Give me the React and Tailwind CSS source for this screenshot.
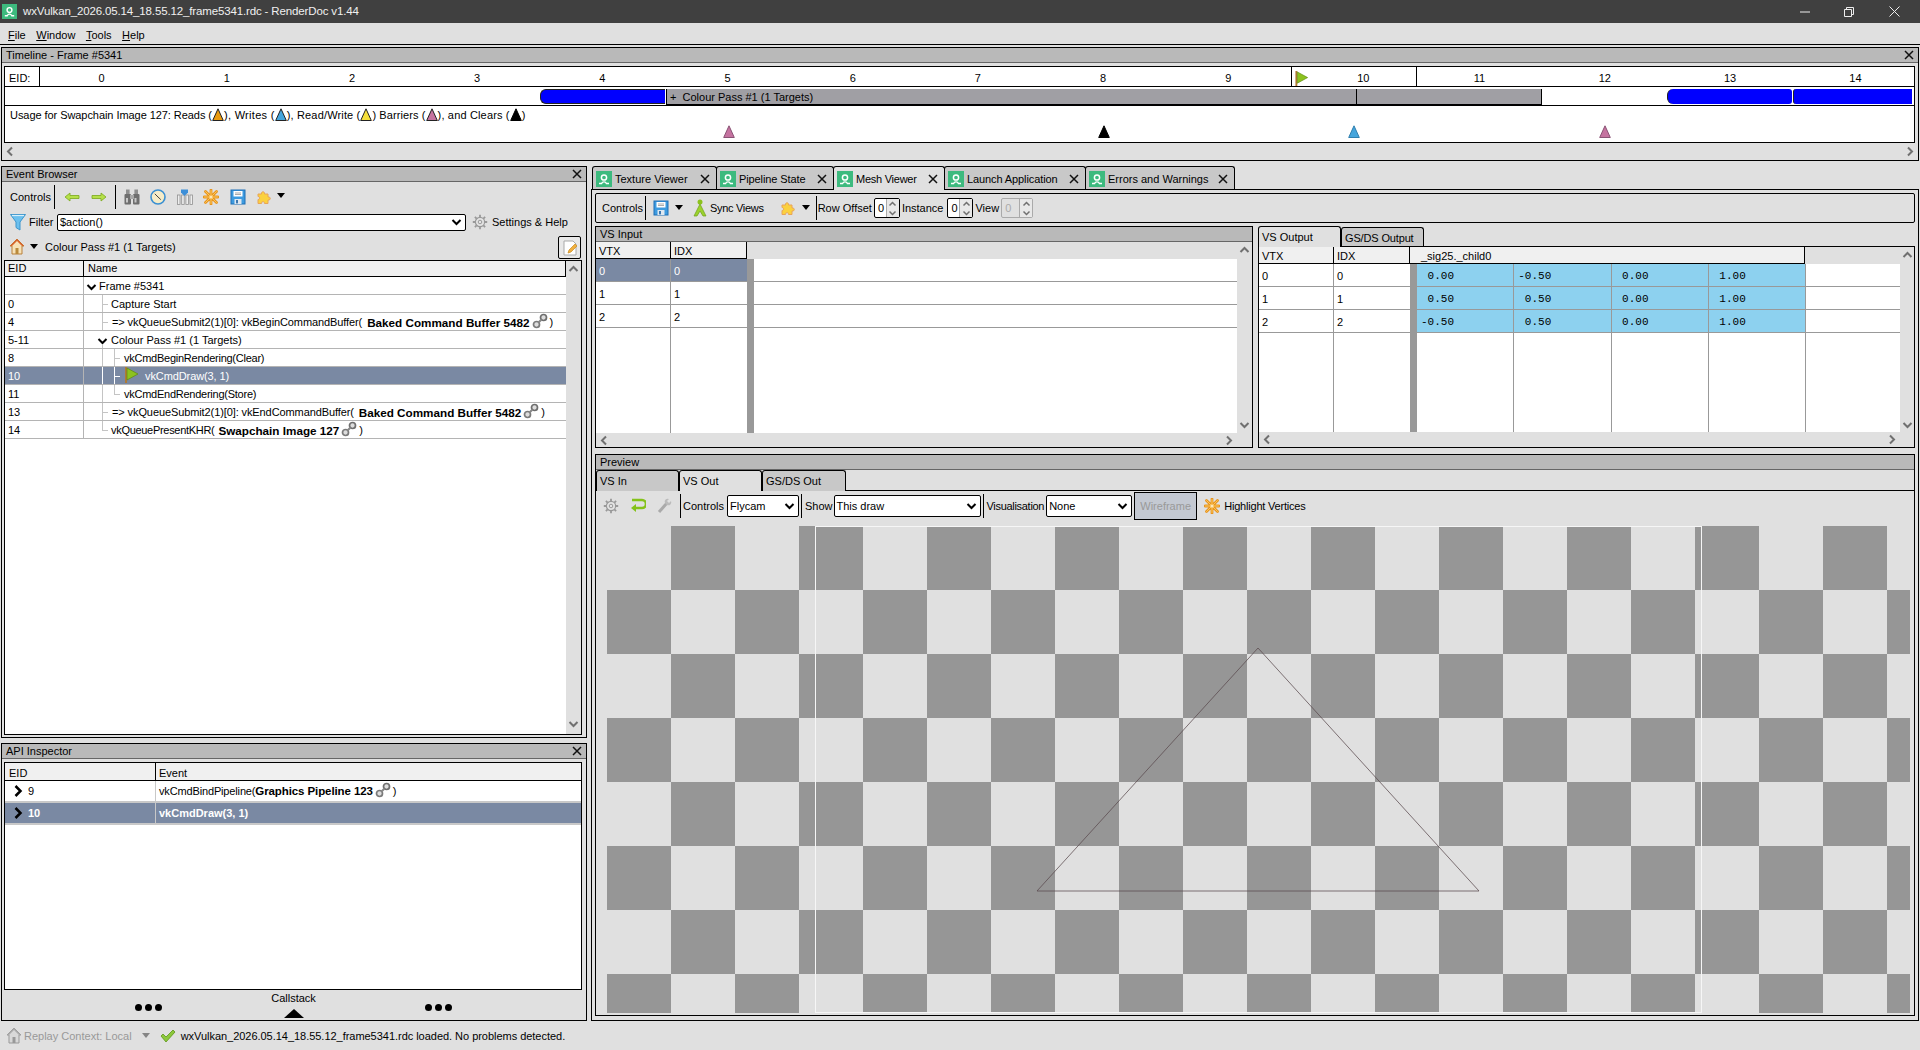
import React from 'react'

const rows = [
  { eid: '', x: 'pl-[15px]', text: 'Frame #5341', arrow: true },
  { eid: '0', x: 'pl-[27px]', text: 'Capture Start', guide: 'a' },
  { eid: '4', x: 'pl-[28px]', text: '=> vkQueueSubmit2(1)[0]: vkBeginCommandBuffer(', track: 'tracking-[-0.1px]', bold: 'Baked Command Buffer 5482', boldMl: 'ml-[5px]', guide: 'a' },
  { eid: '5-11', x: 'pl-[27px]', text: 'Colour Pass #1 (1 Targets)', arrow: 'b', guide: 'v' },
  { eid: '8', x: 'pl-[40px]', text: 'vkCmdBeginRendering(Clear)', track: 'tracking-[-0.25px]', guide: 'b' },
  { eid: '10', x: 'pl-[61px]', text: 'vkCmdDraw(3, 1)', track: 'tracking-[-0.1px]', guide: 'b', selected: true },
  { eid: '11', x: 'pl-[40px]', text: 'vkCmdEndRendering(Store)', track: 'tracking-[-0.25px]', guide: 'c' },
  { eid: '13', x: 'pl-[28px]', text: '=> vkQueueSubmit2(1)[0]: vkEndCommandBuffer(', track: 'tracking-[-0.1px]', bold: 'Baked Command Buffer 5482', boldMl: 'ml-[5px]', guide: 'a' },
  { eid: '14', x: 'pl-[27px]', text: 'vkQueuePresentKHR(', track: 'tracking-[-0.3px]', bold: 'Swapchain Image 127', boldMl: 'ml-[4px]', guide: 'z' },
]

const tabs = [
  { name: 'Texture Viewer', w: 'w-[125px]' },
  { name: 'Pipeline State', w: 'w-[118px]', track: 'tracking-[-0.1px]' },
  { name: 'Mesh Viewer', w: 'w-[112px]', track: 'tracking-[-0.25px]', active: true },
  { name: 'Launch Application', w: 'w-[142px]', track: 'tracking-[-0.1px]' },
  { name: 'Errors and Warnings', w: 'w-[150px]' },
]

const vsOut = [
  ['0', ['0.00', '-0.50', '0.00', '1.00']],
  ['1', ['0.50', '0.50', '0.00', '1.00']],
  ['2', ['-0.50', '0.50', '0.00', '1.00']],
]

const AppIcon = ({ className = 'w-4 h-4' }) => (
  <svg viewBox="0 0 16 16" className={`${className} shrink-0`}>
    <rect width="16" height="16" fill="#3dba7e" />
    <circle cx="8" cy="6.5" r="2.6" fill="none" stroke="#fff" strokeWidth="1.5" />
    <path d="M3 12.5h2.6c.4-1 1.2-1.6 2.4-1.6s2 .6 2.4 1.6H13" fill="none" stroke="#fff" strokeWidth="1.4" />
  </svg>
)

const Close = ({ className = '' }) => (
  <svg viewBox="0 0 10 10" className={`w-[10px] h-[10px] shrink-0 ${className}`}>
    <path d="M1 1l8 8M9 1l-8 8" stroke="#111" strokeWidth="1.5" />
  </svg>
)

const Caret = ({ className = '' }) => (
  <svg viewBox="0 0 8 5" className={`w-2 h-[5px] shrink-0 ${className}`}>
    <path d="M0 0h8L4 5z" fill="#000" />
  </svg>
)

const Chev = ({ dir = 'down', className = '' }) => {
  const d = { up: 'M1 6l4-4 4 4', down: 'M1 2l4 4 4-4', left: 'M6 1L2 5l4 4', right: 'M2 1l4 4-4 4' }[dir]
  const color = className.includes('dark') ? '#000' : '#707070'
  const side = dir === 'left' || dir === 'right'
  return (
    <svg viewBox={side ? '0 0 8 10' : '0 0 10 8'} className={`shrink-0 ${side ? 'w-2 h-[11px]' : 'w-[11px] h-2'} ${className}`}>
      <path d={d} fill="none" stroke={color} strokeWidth="2" />
    </svg>
  )
}

const Flag = ({ className = 'w-[14px] h-[15px]' }) => (
  <svg viewBox="0 0 14 16" className={`shrink-0 ${className}`}>
    <rect x="0" y="0" width="2" height="16" fill="#b07a35" />
    <path d="M2 1l11 6-11 6z" fill="#8cc21e" stroke="#5d8a10" strokeWidth=".7" />
  </svg>
)

const Link = () => (
  <svg viewBox="0 0 16 16" className="w-4 h-4 shrink-0 -mt-[3px]">
    <circle cx="4.5" cy="11.5" r="3" fill="#ddd" stroke="#7a7a7a" strokeWidth="1.7" />
    <circle cx="11.5" cy="4.5" r="3" fill="#ddd" stroke="#6e6e6e" strokeWidth="1.7" />
    <path d="M6.5 9.5l3-3" stroke="#888" strokeWidth="2.2" />
  </svg>
)

const Gear = ({ color = '#999' }) => (
  <svg viewBox="0 0 16 16" className="w-4 h-4 shrink-0">
    <circle cx="8" cy="8" r="4.6" fill="#e4e4e4" stroke={color} strokeWidth="1.2" />
    <circle cx="8" cy="8" r="1.8" fill="none" stroke={color} />
    <path d="M8 .8v2.4M8 12.8v2.4M.8 8h2.4M12.8 8h2.4M2.9 2.9l1.7 1.7M11.4 11.4l1.7 1.7M13.1 2.9l-1.7 1.7M4.6 11.4l-1.7 1.7" stroke={color} strokeWidth="1.8" />
  </svg>
)

const Puzzle = () => (
  <svg viewBox="0 0 16 16" className="w-4 h-4 shrink-0">
    <path d="M2 5h3.5c-.6-3 3.6-3 3 0H12v3c3-.6 3 3.6 0 3v3.5H8.5c.6-2.4-3.4-2.4-3 0H2v-4c2 .5 2-3.5 0-3z" fill="#fbd13e" stroke="#e8a45a" />
  </svg>
)

const Star = ({ className = 'w-4 h-4' }) => (
  <svg viewBox="0 0 16 16" className={`shrink-0 ${className}`}>
    <path d="M2.5 2.5l11 11M13.5 2.5l-11 11M8 1v14M1 8h14" stroke="#e8951e" strokeWidth="2.8" strokeLinecap="round" />
    <path d="M2.5 2.5l11 11M13.5 2.5l-11 11M8 1.5v13M1.5 8h13" stroke="#fbc65a" strokeWidth="1" strokeLinecap="round" />
    <circle cx="8" cy="8" r="1.6" fill="#fde7b8" />
  </svg>
)

const Save = () => (
  <svg viewBox="0 0 16 16" className="w-4 h-4 shrink-0">
    <rect x="1" y="1" width="14" height="14" fill="#3d9be0" stroke="#1f6fb5" />
    <rect x="3.5" y="2" width="9" height="5.5" fill="#fff" />
    <path d="M5 4h6M5 5.5h6" stroke="#888" strokeWidth=".7" />
    <rect x="4.5" y="10" width="7" height="5" fill="#dfe8f0" />
    <rect x="6" y="11" width="2" height="3.4" fill="#3d78b0" />
  </svg>
)

const Arrow = ({ left }) => (
  <svg viewBox="0 0 16 10" className="w-4 h-[10px] shrink-0">
    <path d={left ? 'M1 5l5-4v2.5h9v3H6V9z' : 'M15 5l-5-4v2.5H1v3h9V9z'} fill="#b6e04a" stroke="#7aa81c" strokeWidth=".8" />
  </svg>
)

const Binoculars = () => (
  <svg viewBox="0 0 16 16" className="w-4 h-4 shrink-0">
    <rect x=".5" y="5" width="6.5" height="10.5" rx="1" fill="#6f6f6f" />
    <rect x="9" y="5" width="6.5" height="10.5" rx="1" fill="#6f6f6f" />
    <rect x="2" y=".5" width="3.6" height="4.5" fill="#8f8f8f" />
    <rect x="10.4" y=".5" width="3.6" height="4.5" fill="#8f8f8f" />
    <rect x="6" y="6" width="4" height="4" fill="#a8a8a8" />
    <rect x="2" y="9" width="2" height="4.5" fill="#c8c8c8" />
    <rect x="10.5" y="9" width="2" height="4.5" fill="#c8c8c8" />
  </svg>
)

const Clock = () => (
  <svg viewBox="0 0 16 16" className="w-4 h-4 shrink-0">
    <circle cx="8" cy="8" r="7" fill="#f6ecc8" stroke="#3b90d2" strokeWidth="1.6" />
    <path d="M4.8 4.8L8 8l2.8 2.6" fill="none" stroke="#444" strokeWidth="1" />
  </svg>
)

const Bars = () => (
  <svg viewBox="0 0 16 16" className="w-4 h-4 shrink-0">
    <rect x="0.5" y="6" width="2.5" height="9.5" fill="#eee" stroke="#909090" strokeWidth=".8" />
    <rect x="4.7" y="6" width="2.5" height="9.5" fill="#eee" stroke="#909090" strokeWidth=".8" />
    <rect x="8.9" y="6" width="2.5" height="9.5" fill="#eee" stroke="#909090" strokeWidth=".8" />
    <rect x="13" y="6" width="2.5" height="9.5" fill="#eee" stroke="#909090" strokeWidth=".8" />
    <path d="M4 .5h7v3L7.5 7 4 3.5z" fill="#3d8fd8" />
  </svg>
)

const Funnel = () => (
  <svg viewBox="0 0 16 18" className="w-4 h-[18px] shrink-0">
    <path d="M.5 1.5h15L10 9v8l-4-2.5V9z" fill="#6cc0ee" stroke="#3d95cc" />
    <path d="M2 2.5h12" stroke="#d8f0fb" strokeWidth="1.2" />
  </svg>
)

const House = ({ gray }) => (
  <svg viewBox="0 0 16 17" className="w-4 h-[17px] shrink-0">
    <path d="M8 1L1 8h2v8h10V8h2z" fill={gray ? '#d8d8d8' : '#f6e2b8'} stroke={gray ? '#999' : '#b9803a'} />
    <path d="M8 1L1 8h2l5-5 5 5h2z" fill={gray ? '#aaa' : '#d9622b'} />
    <rect x="6.5" y="10" width="3" height="6" fill={gray ? '#999' : '#b98a3c'} />
  </svg>
)

const Tri = ({ color, border }) => (
  <svg viewBox="0 0 12 13" className="w-3 h-[13px] inline-block align-[-2px]">
    <path d="M6 .8l5.3 11.7H.7z" fill={color} stroke={border} />
  </svg>
)

const Panel = ({ title, close, className = '', children }) => (
  <div className={`flex flex-col border border-black ${className}`}>
    <div className="h-[15px] shrink-0 flex items-center justify-between bg-[#b9b9b9] border-b border-[#666] pl-[4px] pr-[4px] leading-[14px]">
      <span>{title}</span>
      {close && <Close />}
    </div>
    {children}
  </div>
)

const Sep = ({ className = '' }) => <div className={`w-px h-6 bg-black shrink-0 ${className}`} />

const Combo = ({ value, className = '' }) => (
  <div className={`flex items-center justify-between bg-white border border-black rounded-[2px] pl-[2px] pr-[3px] shrink-0 ${className}`}>
    <span>{value}</span>
    <Chev dir="down" className="dark" />
  </div>
)

const Spin = ({ disabled, w = 'w-[26px]' }) => (
  <div className={`flex h-[20px] shrink-0 ${w} border rounded-[2px] ${disabled ? 'border-[#aaa] bg-[#e0e0e0] text-[#aaa]' : 'border-black bg-white'}`}>
    <span className="flex-1 pl-[3px] leading-[18px]">0</span>
    <div className="w-[13px] flex flex-col items-center justify-around border-l border-[#aaa] bg-[#e8e8e8]">
      <Chev dir="up" className="w-[9px] h-[6px]" />
      <Chev dir="down" className="w-[9px] h-[6px]" />
    </div>
  </div>
)

const SmallTab = ({ label, active, className = '' }) => (
  <div className={`border border-b-0 border-black rounded-t-[3px] pl-[3px] leading-[21px] shrink-0 ${active ? 'bg-[#e0e0e0]' : 'bg-[#c8c8c8]'} ${className}`}>
    {label}
  </div>
)

const TreeGuides = ({ kind, selected }) => {
  const c = selected ? 'bg-white' : 'bg-[#c4c4c4]'
  return (
    <>
      {kind !== 'v' && kind !== undefined && kind !== 'z' && <span className={`absolute left-[18px] top-0 bottom-0 w-px ${c}`} />}
      {kind === 'z' && <span className={`absolute left-[18px] top-0 h-[9px] w-px ${c}`} />}
      {kind === 'v' && <span className="absolute left-[18px] top-[14px] bottom-0 w-px bg-[#c4c4c4]" />}
      {(kind === 'a' || kind === 'z') && <span className={`absolute left-[18px] top-[9px] h-px w-[6px] ${c}`} />}
      {kind === 'b' && <span className={`absolute left-[30px] top-0 bottom-0 w-px ${c}`} />}
      {kind === 'b' && <span className={`absolute left-[30px] top-[9px] h-px w-[6px] ${c}`} />}
      {kind === 'c' && <span className="absolute left-[30px] top-0 h-[9px] w-px bg-[#c4c4c4]" />}
      {kind === 'c' && <span className="absolute left-[30px] top-[9px] h-px w-[6px] bg-[#c4c4c4]" />}
    </>
  )
}

const Timeline = () => (
  <Panel title="Timeline - Frame #5341" close className="h-[114px] ml-[1px] w-[1918px] mt-[2px] shrink-0">
    <div className="mx-[2px] mt-[3px] h-[77px] border border-black bg-white shrink-0 w-[1911px] flex flex-col">
      <div className="h-[20px] flex border-b border-black shrink-0 leading-[22px] overflow-hidden">
        <div className="w-[35px] shrink-0 pl-[4px] border-r border-black">EID:</div>
        <div className="-ml-[1px]" />
        {['0', '1', '2', '3', '4', '5', '6', '7', '8', '9'].map((n) => (
          <div key={n} className="w-[125.2px] shrink-0 text-center">{n}</div>
        ))}
        <div className="w-[126px] shrink-0 relative text-center pl-[19px] border-x border-black">
          <Flag className="absolute left-[3px] top-[4px] w-[14px] h-[15px]" />
          10
        </div>
        {['11', '12', '13', '14'].map((n) => (
          <div key={n} className="w-[125.3px] shrink-0 text-center">{n}</div>
        ))}
      </div>
      <div className="h-[19px] flex pt-[2px] border-b border-black shrink-0 pl-[535px]">
        <div className="w-[125px] h-[15px] bg-[#0000ff] rounded-l-[6px] border border-[#222] border-r-0" />
        <div className="w-[876px] ml-px h-[17px] bg-[#a09fa4] border-b-2 border-black flex items-center relative leading-[15px] border-r border-l border-l-black">
          <span className="pl-[3px] pt-[2px]">+&nbsp;&nbsp;Colour Pass #1 (1 Targets)</span>
          <span className="absolute left-[689px] top-0 bottom-0 w-px bg-black" />
        </div>
        <div className="w-[125px] h-[15px] ml-[125px] bg-[#0000ff] rounded-l-[6px] rounded-r-[3px] border-l border-[#222]" />
        <div className="w-[119px] h-[15px] ml-px bg-[#0000ff] rounded-l-[3px] border-l border-[#222]" />
      </div>
      <div className="relative flex-1 pl-[5px] pt-[1px] leading-[16px] whitespace-nowrap">
        <span className="tracking-[-0.06px]">Usage for Swapchain Image 127: Reads (</span><Tri color="#e89b12" border="#222" />
        <span className="tracking-[0.3px]">), Writes (</span><Tri color="#45a5dc" border="#222" />
        <span className="tracking-[0.16px]">), Read/Write (</span><Tri color="#f5df3a" border="#222" />
        <span className="tracking-[0.1px]">) Barriers (</span><Tri color="#c573a0" border="#222" />
        <span className="tracking-[0.16px]">), and Clears (</span><Tri color="#000" border="#000" />)
        <span className="absolute left-[718px] top-[19px] flex"><Tri color="#c573a0" border="#8a5274" /></span>
        <span className="absolute left-[1093px] top-[19px] flex"><Tri color="#000" border="#000" /></span>
        <span className="absolute left-[1343px] top-[19px] flex"><Tri color="#45a5dc" border="#2f7fae" /></span>
        <span className="absolute left-[1594px] top-[19px] flex"><Tri color="#c573a0" border="#8a5274" /></span>
      </div>
    </div>
    <div className="flex-1 flex items-center justify-between px-[4px]">
      <Chev dir="left" />
      <Chev dir="right" />
    </div>
  </Panel>
)

const EventBrowser = () => (
  <Panel title="Event Browser" close className="h-[572px] shrink-0">
    <div className="h-[30px] flex items-center shrink-0">
      <span className="ml-[8px] w-[44px]">Controls</span>
      <Sep />
      <div className="ml-[9px] flex items-center gap-[10.5px]"><Arrow left /><Arrow /></div>
      <Sep className="ml-[8px]" />
      <div className="ml-[8px] flex items-center gap-[10.6px]">
        <Binoculars /><Clock /><Bars /><Star /><Save /><Puzzle />
      </div>
      <Caret className="ml-[5px] -mt-[4px]" />
    </div>
    <div className="h-[20px] flex items-center shrink-0">
      <span className="ml-[8px]"><Funnel /></span>
      <span className="ml-[3px] w-[28px]">Filter</span>
      <Combo value="$action()" className="w-[409px] h-[17px] leading-[15px]" />
      <span className="ml-[6px]"><Gear /></span>
      <span className="ml-[4px]">Settings &amp; Help</span>
    </div>
    <div className="h-[28px] flex items-center shrink-0 relative">
      <span className="ml-[7px]"><House /></span>
      <Caret className="ml-[5px]" />
      <span className="ml-[7px] pt-[2px]">Colour Pass #1 (1 Targets)</span>
      <div className="absolute left-[556px] top-[4px] w-[23px] h-[23px] border border-black rounded-[2px] flex items-center justify-center bg-[#e8e8e8]">
        <svg viewBox="0 0 16 16" className="w-4 h-4">
          <path d="M2 1h9l3 3v11H2z" fill="#fff" stroke="#aaa" />
          <path d="M6 13l1-3 6-6 2 2-6 6z" fill="#f0b040" stroke="#c98a1e" strokeWidth=".7" />
        </svg>
      </div>
    </div>
    <div className="mx-[2px] h-[475px] w-[578px] shrink-0 border border-black bg-white flex overflow-hidden">
      <div className="flex-1 flex flex-col">
        <div className="h-[16px] flex bg-[#f0f0f0] border-b border-black leading-[15px] border-r shrink-0">
          <div className="w-[79px] pl-[3px] border-r border-black">EID</div>
          <div className="pl-[4px]">Name</div>
        </div>
        {rows.map((r) => (
          <div key={r.eid + r.text} className={`h-[18px] flex shrink-0 border-b border-[#b4b4b4] leading-[19px] ${r.selected ? 'bg-[#7a89a3] text-white' : ''}`}>
            <div className="w-[79px] pl-[3px] border-r border-[#b4b4b4] shrink-0">{r.eid}</div>
            <div className={`relative flex-1 flex items-center whitespace-nowrap pt-[1px] ${r.x}`}>
              <TreeGuides kind={r.guide} selected={r.selected} />
              {r.arrow === true && <Chev dir="down" className="dark absolute left-[2px] top-[6px]" />}
              {r.arrow === 'b' && <Chev dir="down" className="dark absolute left-[13px] top-[6px]" />}
              {r.selected && <Flag className="absolute left-[41px] top-0 w-[14px] h-[16px]" />}
              <span className={r.track}>{r.text}</span>
              {r.bold && (
                <>
                  <b className={`font-bold text-[11.7px] ${r.boldMl}`}>{r.bold}</b>
                  <span className="ml-[2px]"><Link /></span>
                  <span className="ml-[2px]">)</span>
                </>
              )}
            </div>
          </div>
        ))}
      </div>
      <div className="w-[15px] shrink-0 bg-[#e0e0e0] flex flex-col items-center justify-between pt-[4px] pb-[6px]">
        <Chev dir="up" />
        <Chev dir="down" />
      </div>
    </div>
  </Panel>
)

const ApiInspector = () => (
  <Panel title="API Inspector" close className="h-[278px] mt-[5px] shrink-0">
    <div className="mx-[2px] mt-[3px] h-[228px] w-[578px] shrink-0 border border-black bg-white flex flex-col">
      <div className="h-[18px] flex bg-[#f0f0f0] border-b border-black leading-[20px] shrink-0">
        <div className="w-[151px] pl-[4px] border-r border-black">EID</div>
        <div className="pl-[3px]">Event</div>
      </div>
      <div className="h-[22px] flex border-b-2 border-[#c8c8c8] items-center shrink-0 leading-[23px]">
        <div className="w-[151px] h-full flex items-center border-r border-[#c8c8c8] pl-[8px] gap-[5px]">
          <Chev dir="right" className="dark w-[10px] h-[14px]" /><span>9</span>
        </div>
        <div className="flex items-center pl-[3px] whitespace-nowrap">
          <span className="tracking-[-0.15px]">vkCmdBindPipeline(</span><b className="text-[11.5px] tracking-[-0.1px]">Graphics Pipeline 123</b>
          <span className="ml-[2px]"><Link /></span><span className="ml-[2px]">)</span>
        </div>
      </div>
      <div className="h-[22px] flex border-b-2 border-[#c8c8c8] items-center bg-[#7a89a3] text-white font-bold shrink-0 leading-[23px]">
        <div className="w-[151px] h-full flex items-center border-r border-[#c8c8c8] pl-[8px] gap-[5px]">
          <Chev dir="right" className="dark w-[10px] h-[14px]" /><span>10</span>
        </div>
        <div className="pl-[3px]">vkCmdDraw(3, 1)</div>
      </div>
    </div>
    <div className="flex-1 flex ml-[74px]">
      <div className="w-[145px] flex justify-center items-end pb-[9px]">
        <Dots />
      </div>
      <div className="w-[145px] flex flex-col items-center pt-[1px] leading-[14px]">
        <span>Callstack</span>
        <svg viewBox="0 0 20 9" className="w-5 h-[9px] mt-[4px]"><path d="M0 9L10 0l10 9z" fill="#000" /></svg>
      </div>
      <div className="w-[145px] flex justify-center items-end pb-[9px]">
        <Dots />
      </div>
    </div>
  </Panel>
)

const Dots = () => (
  <div className="flex gap-[3px]">
    <span className="w-[7px] h-[7px] rounded-full bg-black" />
    <span className="w-[7px] h-[7px] rounded-full bg-black" />
    <span className="w-[7px] h-[7px] rounded-full bg-black" />
  </div>
)

const MeshToolbar = () => (
  <div className="h-[30px] mx-[3px] mt-[3px] border border-black rounded-[2px] flex items-center shrink-0">
    <span className="ml-[6px] w-[43px] pt-[1px]">Controls</span>
    <Sep />
    <span className="ml-[7px]"><Save /></span>
    <Caret className="ml-[6px] -mt-[2px]" />
    <svg viewBox="0 0 16 18" className="w-4 h-[18px] ml-[9px] shrink-0">
      <circle cx="8" cy="3" r="2.5" fill="#8cc21e" />
      <path d="M8 5L2 17h3l3-5 3 5h3z" fill="#9bd22c" stroke="#6f9e18" strokeWidth=".7" />
    </svg>
    <span className="ml-[2px] tracking-[-0.3px] pt-[1px]">Sync Views</span>
    <span className="ml-[16px]"><Puzzle /></span>
    <Caret className="ml-[6px] -mt-[2px]" />
    <Sep className="ml-[6px]" />
    <span className="ml-[1px] pt-[1px]">Row Offset</span>
    <span className="ml-[2px]"><Spin /></span>
    <span className="ml-[2px] pt-[1px]">Instance</span>
    <span className="ml-[4px]"><Spin /></span>
    <span className="ml-[2px] pt-[1px]">View</span>
    <span className="ml-[2px]"><Spin disabled w="w-[32px]" /></span>
  </div>
)

const VsInput = () => (
  <Panel title="VS Input" className="w-[658px] h-[222px] shrink-0">
    <div className="flex-1 flex min-h-0">
      <div className="flex-1 flex flex-col">
        <div className="h-[17px] flex shrink-0">
          <div className="w-[75px] pl-[3px] bg-[#f0f0f0] border-r border-b border-black leading-[18px]">VTX</div>
          <div className="w-[76px] pl-[3px] bg-[#f0f0f0] border-r border-b border-black leading-[18px]">IDX</div>
        </div>
        <div className="flex-1 flex bg-white min-h-0">
          <div className="w-[75px] border-r border-[#999] shrink-0">
            {['0', '1', '2'].map((n, i) => (
              <div key={n} className={`h-[23px] pl-[3px] border-b border-[#999] leading-[24px] ${i === 0 ? 'bg-[#7a89a3] text-white' : ''}`}>{n}</div>
            ))}
          </div>
          <div className="w-[76px] shrink-0">
            {['0', '1', '2'].map((n, i) => (
              <div key={n} className={`h-[23px] pl-[3px] border-b border-[#999] leading-[24px] ${i === 0 ? 'bg-[#7a89a3] text-white' : ''}`}>{n}</div>
            ))}
          </div>
          <div className="w-[7px] bg-[#999] shrink-0" />
          <div className="flex-1">
            <div className="h-[23px] border-b border-[#999]" />
            <div className="h-[23px] border-b border-[#999]" />
            <div className="h-[23px] border-b border-[#999]" />
          </div>
        </div>
        <div className="h-[14px] flex items-center justify-between px-[4px] shrink-0">
          <Chev dir="left" /><Chev dir="right" />
        </div>
      </div>
      <div className="w-[15px] flex flex-col items-center justify-between pt-[4px] pb-[18px] shrink-0">
        <Chev dir="up" /><Chev dir="down" />
      </div>
    </div>
  </Panel>
)

const VsOutput = () => (
  <div className="w-[657px] ml-[5px] h-[222px] flex flex-col shrink-0">
    <div className="flex h-[21px] shrink-0">
      <SmallTab label="VS Output" active className="w-[83px] h-[21px] z-10 -mb-px" />
      <SmallTab label="GS/DS Output" className="w-[83px] h-[20px] leading-[19px] mt-px tracking-[-0.15px]" />
    </div>
    <div className="flex-1 border border-black flex min-h-0 -mt-px">
      <div className="flex-1 flex flex-col min-w-0">
        <div className="h-[17px] flex shrink-0 leading-[18px]">
          <div className="w-[75px] pl-[3px] bg-[#f0f0f0] border-b border-r border-black">VTX</div>
          <div className="w-[76px] pl-[3px] bg-[#f0f0f0] border-b border-r border-black">IDX</div>
          <div className="w-[395px] pl-[11px] bg-[#f0f0f0] border-b border-r border-black">_sig25._child0</div>
        </div>
        <div className="flex-1 flex bg-white min-h-0">
          <div className="w-[75px] border-r border-[#999] shrink-0">
            {vsOut.map(([n]) => <div key={n} className="h-[23px] pl-[3px] border-b border-[#999] leading-[24px]">{n}</div>)}
          </div>
          <div className="w-[76px] shrink-0">
            {vsOut.map(([n]) => <div key={n} className="h-[23px] pl-[3px] border-b border-[#999] leading-[24px]">{n}</div>)}
          </div>
          <div className="w-[7px] bg-[#999] shrink-0" />
          {[0, 1, 2, 3].map((c) => (
            <div key={c} className="w-[97.25px] border-r border-[#999] shrink-0">
              {vsOut.map(([n, vals]) => (
                <div key={n} className="h-[23px] bg-[#8dd1ef] border-b border-[#999] font-['Liberation_Mono',monospace] text-[11px] leading-[24px] pl-[4px] whitespace-pre">
                  {vals[c].padStart(5, ' ')}
                </div>
              ))}
            </div>
          ))}
          <div className="flex-1">
            <div className="h-[23px] border-b border-[#999]" />
            <div className="h-[23px] border-b border-[#999]" />
            <div className="h-[23px] border-b border-[#999]" />
          </div>
        </div>
        <div className="h-[15px] flex items-center justify-between px-[4px] shrink-0">
          <Chev dir="left" /><Chev dir="right" />
        </div>
      </div>
      <div className="w-[14px] flex flex-col items-center justify-between pt-[4px] pb-[18px] shrink-0">
        <Chev dir="up" /><Chev dir="down" />
      </div>
    </div>
  </div>
)

const Preview = () => (
  <Panel title="Preview" className="mx-[3px] mt-[6px] h-[562px] shrink-0">
    <div className="flex h-[21px] shrink-0 border-b border-black -mb-px">
      <SmallTab label="VS In" className="w-[83px] h-[21px] leading-[20px]" />
      <SmallTab label="VS Out" active className="w-[83px] h-[21px] z-10 leading-[20px]" />
      <SmallTab label="GS/DS Out" className="w-[84px] h-[21px] leading-[20px]" />
    </div>
    <div className="h-[32px] flex items-center shrink-0">
      <span className="ml-[7px]"><Gear /></span>
      <svg viewBox="0 0 16 16" className="w-4 h-4 ml-[11px] shrink-0">
        <path d="M2 2h10a2.5 2.5 0 0 1 0 8H5" fill="none" stroke="#84c21a" strokeWidth="2.6" />
        <path d="M6 6l-5 4 5 4z" fill="#84c21a" />
      </svg>
      <svg viewBox="0 0 16 16" className="w-4 h-4 ml-[10px] shrink-0">
        <path d="M3 14L11 5" stroke="#aaa" strokeWidth="3" />
        <path d="M9 5a3 3 0 0 1 4-4l-2 2 2 2 2-2a3 3 0 0 1-4 4z" fill="#bbb" />
      </svg>
      <Sep className="ml-[8px]" />
      <span className="ml-[2px] pt-[1px]">Controls</span>
      <Combo value="Flycam" className="w-[72px] h-[22px] leading-[20px] ml-[3px]" />
      <Sep className="ml-[2px]" />
      <span className="ml-[3px] pt-[1px]">Show</span>
      <Combo value="This draw" className="w-[147px] h-[22px] leading-[20px] ml-[1px]" />
      <Sep className="ml-[2px]" />
      <span className="ml-[3px] pt-[1px] tracking-[-0.3px]">Visualisation</span>
      <Combo value="None" className="w-[86px] h-[22px] leading-[20px] ml-[2px]" />
      <div className="ml-[2px] w-[63px] h-[28px] border border-black bg-[#c4c9d2] text-[#999] flex items-center justify-center shrink-0">Wireframe</div>
      <span className="ml-[7px]"><Star /></span>
      <span className="ml-[4px] pt-[1px] tracking-[-0.2px]">Highlight Vertices</span>
    </div>
    <div className="relative ml-[11px] w-[1303px] h-[487px] bg-[conic-gradient(#969696_25%,#e0e0e0_0_50%,#969696_0_75%,#e0e0e0_0)] bg-[length:128px_128px] mt-[4px] shrink-0">
      <div className="absolute left-[208px] top-0 w-[887px] h-[487px] border border-[#f6f6f6]" />
      <svg viewBox="0 0 1303 487" className="absolute inset-0 w-full h-full">
        <path d="M651 122L430 365h442z" fill="none" stroke="#5a4a4e" strokeOpacity=".75" strokeWidth="1" />
      </svg>
    </div>
  </Panel>
)

export default function App() {
  return (
    <div className="w-[1920px] h-[1050px] bg-[#e0e0e0] text-black text-[11px] font-['Liberation_Sans',sans-serif] flex flex-col overflow-hidden">
      <div className="h-[23px] bg-[#404040] flex items-center shrink-0 text-[#f0f0f0] text-[11.5px]">
        <span className="ml-[2px]"><AppIcon className="w-[15px] h-[15px]" /></span>
        <span className="ml-[6px] tracking-[-0.14px]">wxVulkan_2026.05.14_18.55.12_frame5341.rdc - RenderDoc v1.44</span>
        <div className="ml-auto flex items-center">
          <svg viewBox="0 0 10 10" className="w-[10px] h-[10px] mr-[34px]"><path d="M0 5h10" stroke="#eee" /></svg>
          <svg viewBox="0 0 10 10" className="w-[10px] h-[10px] mr-[35px]"><path d="M.5 2.5h7v7h-7zM2.5 2.5v-2h7v7h-2" fill="none" stroke="#eee" /></svg>
          <svg viewBox="0 0 11 11" className="w-[11px] h-[11px] mr-[20px]"><path d="M.5.5l10 10M10.5.5l-10 10" stroke="#eee" /></svg>
        </div>
      </div>
      <div className="h-[22px] flex items-center border-b border-black shrink-0 pl-[8px] pt-[3px] gap-[10.5px]">
        <span><u>F</u>ile</span>
        <span><u>W</u>indow</span>
        <span><u>T</u>ools</span>
        <span><u>H</u>elp</span>
      </div>
      <Timeline />
      <div className="flex mt-[5px] h-[855px] shrink-0">
        <div className="w-[586px] ml-[1px] flex flex-col shrink-0">
          <EventBrowser />
          <ApiInspector />
        </div>
        <div className="w-[1328px] ml-[4px] flex flex-col shrink-0">
          <div className="flex h-[24px] shrink-0 pl-[1px]">
            {tabs.map((t) => (
              <div key={t.name} className={`${t.w} h-[24px] -mr-px flex items-center border border-b-0 border-black rounded-t-[3px] pl-[3px] pr-[6px] shrink-0 ${t.active ? 'bg-[#e0e0e0] z-10' : 'bg-[#c8c8c8]'}`}>
                <AppIcon />
                <span className={`ml-[3px] flex-1 pt-[1px] ${t.track || ''}`}>{t.name}</span>
                <Close />
              </div>
            ))}
          </div>
          <div className="h-[832px] border border-black -mt-px flex flex-col shrink-0">
            <MeshToolbar />
            <div className="flex mx-[3px] mt-[3px] shrink-0">
              <VsInput />
              <VsOutput />
            </div>
            <Preview />
          </div>
        </div>
      </div>
      <div className="flex-1 flex items-center">
        <span className="ml-[6px]"><House gray /></span>
        <span className="ml-[2px] text-[#999] pt-[1px]">Replay Context: Local</span>
        <Caret className="ml-[10px] opacity-40" />
        <svg viewBox="0 0 16 14" className="w-4 h-[14px] ml-[10px] shrink-0">
          <path d="M1 7l2-2 3 3 7-7 2 2-9 10z" fill="#8cc83c" stroke="#5d9418" strokeWidth=".8" />
        </svg>
        <span className="ml-[5px] pt-[1px] tracking-[-0.03px]">wxVulkan_2026.05.14_18.55.12_frame5341.rdc loaded. No problems detected.</span>
      </div>
    </div>
  )
}
